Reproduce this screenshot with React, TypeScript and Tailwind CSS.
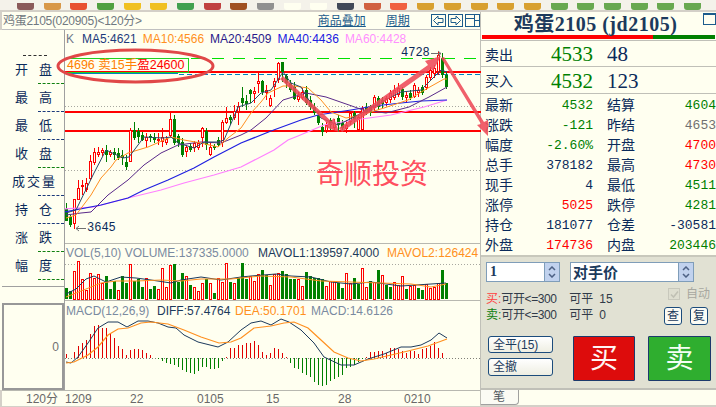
import React from 'react';

const IVORY = '#fffff0';
const sans = "[font-family:'Liberation_Sans','Noto_Sans_CJK_SC',sans-serif]";
const RED = '#ff0000';
const GREEN = '#008000';

// top, bottom, wick top, wick bottom, colour. x = 65 + 4 * index
type Candle = [number, number, number, number, 'r' | 'g'];
const candles: Candle[] = [
  [209, 221, 203, 221, 'g'], [217, 225, 215, 227, 'g'], [199, 224, 199, 229, 'r'], [188, 200, 180, 200, 'r'],
  [185, 187, 180, 195, 'r'], [183, 190, 178, 192, 'r'], [161, 179, 155, 180, 'r'], [152, 163, 148, 165, 'r'],
  [152, 155, 147, 157, 'r'], [150, 153, 148, 156, 'r'], [150, 155, 145, 162, 'g'], [152, 155, 150, 157, 'r'],
  [152, 155, 148, 160, 'g'], [153, 158, 148, 160, 'g'], [155, 158, 150, 165, 'g'], [162, 167, 155, 170, 'g'],
  [130, 162, 128, 162, 'r'], [130, 138, 122, 140, 'g'], [131, 137, 128, 143, 'g'], [135, 140, 132, 141, 'g'],
  [137, 141, 133, 147, 'r'], [136, 138, 134, 142, 'g'], [137, 140, 133, 143, 'g'], [139, 141, 133, 145, 'r'],
  [137, 142, 128, 147, 'r'], [139, 143, 136, 145, 'r'], [119, 136, 113, 137, 'r'], [119, 143, 115, 145, 'g'],
  [136, 143, 134, 147, 'g'], [142, 155, 138, 157, 'g'], [147, 152, 145, 157, 'r'], [146, 150, 143, 152, 'g'],
  [143, 148, 141, 152, 'r'], [143, 148, 140, 150, 'r'], [128, 138, 127, 147, 'r'], [131, 145, 128, 150, 'g'],
  [147, 155, 143, 156, 'r'], [146, 148, 144, 150, 'g'], [140, 145, 137, 147, 'g'], [122, 143, 120, 147, 'r'],
  [118, 123, 107, 124, 'r'], [117, 120, 115, 125, 'g'], [111, 118, 105, 120, 'r'], [106, 112, 102, 125, 'r'],
  [98, 103, 87, 107, 'g'], [101, 104, 95, 110, 'g'], [90, 94, 89, 103, 'g'], [91, 94, 87, 103, 'r'],
  [81, 84, 73, 93, 'r'], [81, 92, 80, 95, 'g'], [90, 93, 85, 100, 'r'], [98, 106, 95, 107, 'r'],
  [81, 87, 78, 97, 'r'], [63, 80, 62, 83, 'r'], [62, 72, 62, 82, 'g'], [76, 83, 74, 88, 'g'],
  [83, 90, 80, 92, 'g'], [87, 99, 82, 100, 'g'], [96, 100, 92, 102, 'r'], [92, 98, 88, 100, 'r'],
  [90, 103, 86, 105, 'g'], [100, 107, 96, 110, 'g'], [107, 113, 103, 115, 'g'], [115, 123, 113, 125, 'g'],
  [127, 132, 123, 136, 'g'], [125, 131, 122, 133, 'r'], [120, 125, 118, 130, 'g'], [123, 128, 119, 132, 'r'],
  [118, 125, 115, 132, 'g'], [123, 128, 120, 130, 'g'], [125, 129, 120, 133, 'r'], [113, 122, 111, 125, 'r'],
  [113, 120, 111, 128, 'g'], [117, 130, 115, 130, 'r'], [108, 130, 106, 130, 'r'], [107, 112, 103, 115, 'g'],
  [107, 113, 105, 116, 'g'], [97, 108, 95, 112, 'r'], [98, 107, 96, 110, 'g'], [100, 104, 97, 108, 'g'],
  [98, 103, 96, 106, 'r'], [93, 100, 90, 103, 'r'], [90, 98, 85, 100, 'r'], [88, 95, 83, 97, 'r'],
  [89, 97, 87, 100, 'g'], [95, 98, 92, 103, 'r'], [93, 98, 90, 100, 'g'], [85, 97, 83, 98, 'r'],
  [90, 93, 87, 97, 'r'], [87, 93, 85, 95, 'g'], [77, 88, 75, 90, 'r'], [70, 78, 67, 80, 'r'],
  [68, 74, 65, 78, 'r'], [55, 72, 52, 75, 'r'], [58, 75, 53, 78, 'g'], [75, 87, 72, 89, 'g'],
];

const ma5 = '65,213 75,210 93,173 105,150 122,158 128,157 143,137 162,138 170,137 177,143 193,148 203,142 217,142 223,140 237,107 250,103 260,93 270,90 282,72 290,83 300,87 312,107 320,118 337,125 353,117 370,108 390,97 400,92 420,90 430,80 440,70 446,72';
const ma10 = '65,218 75,215 90,195 100,178 110,167 115,160 127,153 147,147 170,137 183,140 200,143 217,147 227,138 240,128 250,113 260,102 267,93 282,86 293,86 307,88 320,100 330,112 345,118 360,115 383,108 407,100 427,88 443,79 446,79';
const ma20 = '65,215 80,213 90,212 107,195 127,180 143,165 160,153 177,145 200,142 220,143 240,135 250,130 265,118 282,100 305,93 325,97 348,105 362,110 385,113 408,107 428,97 446,87';
const ma40 = '63,212 100,205 127,198 143,190 167,180 193,168 213,157 240,143 270,131 300,120 317,115 350,110 373,106 400,103 420,101 446,100';
const ma60 = '63,209 93,207 127,198 160,190 183,183 213,175 240,167 273,150 287,140 297,136 323,125 353,120 390,115 423,107 446,100';

// top of each volume bar, x = 65 + 4 * index
const vol: [number, 'r' | 'g'][] = [
  [287, 'g'], [290, 'g'], [270, 'r'], [260, 'r'], [278, 'r'], [289, 'r'], [272, 'r'], [277, 'r'], [273, 'r'], [282, 'r'], [275, 'g'],
  [288, 'g'], [280, 'g'], [289, 'r'], [275, 'g'], [282, 'g'], [263, 'r'], [280, 'g'], [278, 'g'], [286, 'g'], [277, 'r'], [288, 'g'],
  [285, 'g'], [288, 'r'], [267, 'r'], [286, 'r'], [264, 'r'], [263, 'g'], [281, 'g'], [272, 'g'], [275, 'r'], [284, 'g'], [286, 'r'],
  [290, 'r'], [282, 'r'], [278, 'g'], [282, 'r'], [292, 'g'], [277, 'r'], [281, 'r'], [262, 'r'], [281, 'g'], [282, 'r'], [277, 'g'],
  [262, 'g'], [278, 'g'], [275, 'r'], [280, 'r'], [273, 'r'], [269, 'g'], [274, 'g'], [284, 'r'], [273, 'r'], [272, 'r'], [270, 'g'],
  [273, 'g'], [278, 'g'], [278, 'g'], [278, 'r'], [285, 'r'], [271, 'g'], [275, 'g'], [277, 'g'], [277, 'g'], [278, 'g'], [285, 'r'],
  [280, 'r'], [280, 'r'], [282, 'g'], [287, 'g'], [272, 'r'], [282, 'r'], [277, 'g'], [283, 'g'], [267, 'r'], [286, 'r'], [280, 'g'],
  [281, 'r'], [269, 'g'], [274, 'r'], [284, 'g'], [286, 'g'], [281, 'r'], [284, 'r'], [275, 'r'], [288, 'g'], [285, 'r'], [284, 'r'],
  [287, 'g'], [289, 'g'], [283, 'r'], [287, 'r'], [286, 'r'], [282, 'r'], [269, 'g'], [282, 'g'],
];
const mavol1 = '65,293 75,288 85,278 93,275 105,281 120,276 135,277 150,279 170,282 180,279 200,276 220,279 240,276 250,275 275,273 290,275 310,276 330,281 350,283 370,281 400,285 430,283 445,282';
const mavol2 = '65,296 80,290 100,282 115,280 135,280 160,279 180,280 200,278 230,278 260,275 290,276 320,280 350,281 380,282 410,283 430,286 445,283';

// top of each macd bar (above or below the zero line at y 358)
const macd = [
  354, 358, 352, 346, 343, 340, 334, 326, 325, 328, 328, 333, 338, 346, 349, 355, 350, 349, 349, 350, 353, 355, 358,
  359, 361, 363, 364, 365, 367, 370, 372, 373, 374, 371, 367, 367, 369, 369, 368, 361, 357, 348, 348,
  345, 345, 343, 343, 341, 345, 352, 355, 353, 348, 349, 353, 357, 363, 368, 369, 373, 375, 377, 382, 385, 386, 385, 381, 379, 377, 375, 368, 367, 365, 362, 359, 357, 352, 352, 351, 351, 353, 348, 348, 349, 351, 353, 351, 351, 354, 349, 348, 346, 342, 348, 353,
];
const diff = '65,362 70,363 77,357 87,343 97,328 107,322 117,322 126,327 137,321 147,321 157,323 167,327 175,328 183,335 197,342 217,347 227,342 240,330 250,323 260,321 270,325 280,319 288,322 300,330 313,343 323,357 340,365 353,365 367,359 383,354 400,347 410,347 420,345 430,340 438,333 446,338';
const dea = '65,363 73,362 87,355 97,347 107,335 117,329 127,328 140,323 150,322 167,324 183,330 200,337 218,343 230,342 240,338 253,328 270,326 283,323 293,322 307,328 320,340 333,352 347,358 360,361 373,359 390,355 407,351 427,346 446,339';

function MainPane() {
  return (
    <svg className="block w-[416px] h-[213px]" viewBox="64 30 416 213" shapeRendering="crispEdges">
      <line x1="64" x2="480" y1="106.5" y2="106.5" stroke="#a8a8a0" strokeDasharray="1 2" />
      <line x1="64" x2="480" y1="170.5" y2="170.5" stroke="#a8a8a0" strokeDasharray="1 2" />
      <line x1="190" x2="480" y1="58.5" y2="58.5" stroke="#00e000" strokeDasharray="12 9" />
      <rect x="64" y="71" width="416" height="2" fill={RED} />
      <rect x="64" y="111" width="416" height="2" fill={RED} />
      <rect x="64" y="130" width="416" height="2" fill={RED} />
      <line x1="64" x2="177" y1="73.5" y2="73.5" stroke="#0080c0" />
      <line x1="178" x2="480" y1="74.5" y2="74.5" stroke="#0080c0" strokeDasharray="5 3" />
      <rect x="63.5" y="58.5" width="124" height="14" fill="none" stroke="#20d020" />
      {candles.map(([t, b, wt, wb, c], i) => {
        const x = 65 + 4 * i;
        const col = c === 'r' ? RED : GREEN;
        return (
          <g key={i}>
            <line x1={x + 0.5} x2={x + 0.5} y1={wt} y2={wb} stroke={col} />
            {c === 'r' ? (
              <rect x={x - 0.5} y={t + 0.5} width={2} height={Math.max(b - t - 1, 1)} fill={IVORY} stroke={col} />
            ) : (
              <rect x={x - 1} y={t} width={3} height={b - t} fill={col} />
            )}
          </g>
        );
      })}
      <g fill="none" strokeWidth="1" shapeRendering="auto">
        <polyline points={ma60} stroke="#ff80ff" strokeWidth="1.2" />
        <polyline points={ma40} stroke="#2020e0" strokeWidth="1.2" />
        <polyline points={ma20} stroke="#5a2a8a" />
        <polyline points={ma10} stroke="#ff9020" />
        <polyline points={ma5} stroke="#2a4a6a" />
      </g>
      <path d="M430 53.5H440M437 51l3 2.5-3 2.5" stroke="#707070" fill="none" shapeRendering="auto" />
      <path d="M85 228.5H75M78 226l-3 2.5 3 2.5" stroke="#707070" fill="none" shapeRendering="auto" />
    </svg>
  );
}

function VolPane() {
  return (
    <svg className="block w-[416px] h-[57px]" viewBox="64 243 416 57" shapeRendering="crispEdges">
      <line x1="64" x2="480" y1="263.5" y2="263.5" stroke="#a8a8a0" strokeDasharray="1 2" />
      {vol.map(([t, c], i) => {
        const x = 65 + 4 * i;
        return c === 'r' ? (
          <rect key={i} x={x - 0.5} y={t + 0.5} width={2} height={298 - t - 0.5} fill={IVORY} stroke={RED} />
        ) : (
          <rect key={i} x={x - 1} y={t} width={3} height={298 - t} fill={GREEN} />
        );
      })}
      <polyline points={mavol1} fill="none" stroke="#1c3a5c" shapeRendering="auto" />
      <polyline points={mavol2} fill="none" stroke="#ff9020" shapeRendering="auto" />
    </svg>
  );
}

function MacdPane() {
  return (
    <svg className="block w-[416px] h-[88px]" viewBox="64 301 416 88" shapeRendering="crispEdges">
      <line x1="64" x2="480" y1="358.5" y2="358.5" stroke="#808078" strokeDasharray="1 2" />
      {macd.map((t, i) => {
        const x = 65.5 + 4 * i;
        return <line key={i} x1={x} x2={x} y1={t} y2={358} stroke={t < 358 ? '#e00000' : GREEN} />;
      })}
      <polyline points={diff} fill="none" stroke="#1c3a5c" shapeRendering="auto" />
      <polyline points={dea} fill="none" stroke="#ff9020" strokeWidth="1.2" shapeRendering="auto" />
    </svg>
  );
}

const railRows: [string[], string][] = [
  [['开', '盘'], 'border-[#108010]'],
  [['最', '高'], 'border-[#1c3a7c]'],
  [['最', '低'], 'border-[#1c3a7c]'],
  [['收', '盘'], 'border-[#108010]'],
  [['成', '交', '量'], 'border-[#1c3a7c]'],
  [['持', '仓'], 'border-[#1c3a7c]'],
  [['涨', '跌'], 'border-[#108010]'],
  [['幅', '度'], 'border-[#108010]'],
];

function LeftRail() {
  return (
    <div className="w-[62px] ml-[2px] flex flex-col shrink-0">
      <div className="h-[26px] flex items-end pl-[21px]">
        <div className="w-[24px] border-b border-dashed border-[#303030]" />
      </div>
      {railRows.map(([chars, line], i) => (
        <div key={i} className="h-[28px] flex flex-col justify-end">
          <div className={`flex-1 flex items-center text-[13px] leading-none text-[#0a2a5a] ${chars.length === 3 ? 'pl-[10px] gap-[2px]' : 'pl-[13px] gap-[11px]'}`}>
            {chars.map((c) => (
              <span key={c}>{c}</span>
            ))}
          </div>
          <div className={`ml-[36px] border-b border-dashed ${line}`} />
        </div>
      ))}
      <div className="mt-[6px] border-b border-[#a0a0a0]" />
      <div className="mt-[16px] h-[87px] border-2 border-[#989898] flex items-center justify-end pr-[3px] text-[12px] text-[#707070]">
        0
      </div>
    </div>
  );
}

function NavBtn({ kind }: { kind: 'l' | 'r' | 'p' }) {
  return (
    <div className="w-[15px] h-[13px] border border-[#1c5c8c]">
      <svg width="13" height="11" viewBox="0 0 13 11" fill="none" stroke="#1c5c8c">
        {kind === 'l' && <path d="M11 3.5H6V1L1.5 5.5 6 10V7.5h5z" />}
        {kind === 'r' && <path d="M2 3.5h5V1l4.5 4.5L7 10V7.5H2z" />}
        {kind === 'p' && <path d="M8.5 0V11M8.5 5.5H13M0 3.5H8" />}
      </svg>
    </div>
  );
}

function Spinner() {
  return (
    <div className="w-[15px] h-full bg-[#c1d2ee] flex flex-col items-center justify-center gap-[2px] border-l border-[#7f9db9]">
      <svg width="8" height="5" viewBox="0 0 8 5" fill="none" stroke="#4d6185" strokeWidth="1.5">
        <path d="M1 4l3-3 3 3" />
      </svg>
      <svg width="8" height="5" viewBox="0 0 8 5" fill="none" stroke="#4d6185" strokeWidth="1.5">
        <path d="M1 1l3 3 3-3" />
      </svg>
    </div>
  );
}

const quotes: [string, string, string, string, string, string][] = [
  ['最新', '4532', 'text-[#008000]', '结算', '4604', 'text-[#008000]'],
  ['涨跌', '-121', 'text-[#008000]', '昨结', '4653', 'text-[#707070]'],
  ['幅度', '-2.60%', 'text-[#008000]', '开盘', '4700', 'text-[#ff0000]'],
  ['总手', '378182', 'text-[#0a2a5a]', '最高', '4730', 'text-[#ff0000]'],
  ['现手', '4', 'text-[#0a2a5a]', '最低', '4511', 'text-[#008000]'],
  ['涨停', '5025', 'text-[#ff0000]', '跌停', '4281', 'text-[#008000]'],
  ['持仓', '181077', 'text-[#0a2a5a]', '仓差', '-30581', 'text-[#0a2a5a]'],
  ['外盘', '174736', 'text-[#ff0000]', '内盘', '203446', 'text-[#008000]'],
];

const toolbarIcons = [
  '#8a5a5a', '#d89848', '#e85030', '#50a040', '#f0c020', '#f0c020', '#40a050', '#c04040', '#a05020', '#909090', '#fffff0', '#fffff0',
  '#404858', '#d06040', '#f06040', '#d8a030', '#d8a030', '#d8a030', '#d8a030', '#d8a030', '#68a850', '#68a850', '#68a850', '#68a850', '#68a850', '#68a850',
];

export default function App() {
  const mono = "[font-family:'Liberation_Mono','Noto_Sans_CJK_SC',monospace]";
  const serif = "[font-family:'Liberation_Serif','Noto_Sans_CJK_SC',serif]";
  return (
    <div className={`relative w-[716px] h-[407px] overflow-hidden bg-[#d4d0c8] flex flex-col ${sans}`}>
      {/* Toolbar, cropped by the screenshot */}
      <div className="h-[10px] bg-[#f4f2ea] flex pl-[12px] items-end overflow-hidden shrink-0">
        {toolbarIcons.map((c, i) => (
          <div key={i} className="w-[26.7px] shrink-0 flex justify-center">
            <div className="w-[17px] h-[7px] rounded-b-[3px]" style={{ background: c }} />
          </div>
        ))}
      </div>

      <div className="h-[2px] shrink-0" />

      <div className="flex flex-1 min-h-0">
        {/* Chart side */}
        <div className="w-[480px] flex flex-col shrink-0">
          <div className="h-[18px] ml-[2px] bg-[#fffff0] flex items-center border-b border-[#c0c0c0] shrink-0">
            <span className="ml-[1px] text-[12px] leading-none tracking-[-0.3px] text-[#707880] whitespace-nowrap">鸡蛋2105(020905)&lt;120分&gt;</span>
            <span className="ml-[176px] text-[12px] leading-none text-[#1c5c8c] underline whitespace-nowrap">商品叠加</span>
            <span className="ml-[20px] text-[12px] leading-none text-[#1c5c8c] underline whitespace-nowrap">周期</span>
            <div className="ml-[21px] flex gap-[2px]">
              <NavBtn kind="l" />
              <NavBtn kind="r" />
              <NavBtn kind="p" />
            </div>
          </div>

          <div className="flex bg-[#fffff0]">
            <LeftRail />
            <div className="w-[416px] flex flex-col border-l border-[#a0a0a0]">
              <div className="relative h-[213px]">
                <MainPane />
                <div className="absolute left-[1px] top-[2px] flex text-[12px] leading-[14px] whitespace-nowrap gap-[6px]">
                  <span className="text-[#707888] w-[10px]">K</span>
                  <span className="text-[#1c3a7c]">MA5:4621</span>
                  <span className="text-[#ff9020]">MA10:4566</span>
                  <span className="text-[#2a1a8a]">MA20:4509</span>
                  <span className="text-[#2020e0]">MA40:4436</span>
                  <span className="text-[#ff90ff]">MA60:4428</span>
                </div>
                <div className="absolute left-[2px] top-[28px] text-[12.5px] leading-[14px] whitespace-nowrap">
                  <span className="text-[#ff8000]">4696 卖15手</span>
                  <span className="text-[#ff0000]">盈24600</span>
                </div>
                <span className={`absolute left-[336px] top-[16px] text-[12px] leading-[14px] text-[#0a2a5a] ${mono}`}>4728</span>
                <span className={`absolute left-[22px] top-[191px] text-[12px] leading-[14px] text-[#0a2a5a] ${mono}`}>3645</span>
                <span className="absolute left-[251px] top-[128px] text-[28px] leading-[34px] text-[#ff5060] whitespace-nowrap">奇顺投资</span>
              </div>
              <div className="relative h-[57px] border-t border-[#b8b8b0]">
                <VolPane />
                <div className="absolute left-[1px] top-[2px] flex text-[12px] leading-[14px] whitespace-nowrap">
                  <span className="text-[#7a8aa0] w-[192px]">VOL(5,10) VOLUME:137335.0000</span>
                  <span className="text-[#1c3a5c] w-[129px]">MAVOL1:139597.4000</span>
                  <span className="text-[#ff9020]">MAVOL2:126424</span>
                </div>
              </div>
              <div className="relative h-[88px] border-t border-[#b8b8b0]">
                <MacdPane />
                <div className="absolute left-[1px] top-[3px] flex text-[12px] leading-[14px] whitespace-nowrap">
                  <span className="text-[#7a8aa0] w-[91px]">MACD(12,26,9)</span>
                  <span className="text-[#1c3a5c] w-[78px]">DIFF:57.4764</span>
                  <span className="text-[#ff9020] w-[76px]">DEA:50.1701</span>
                  <span className="text-[#7a8aa0]">MACD:14.6126</span>
                </div>
              </div>
            </div>
          </div>

          <div className="h-[16px] ml-[2px] bg-[#fffff0] border-t border-[#b8b8b0] flex items-center text-[12px] leading-none text-[#686868] shrink-0">
            <span className="w-[56px] text-right">120分</span>
            <div className="flex">
              <span className="ml-[7px] w-[65px]">1209</span>
              <span className="w-[67px]">22</span>
              <span className="w-[69px]">0105</span>
              <span className="w-[72px]">15</span>
              <span className="w-[66px]">28</span>
              <span>0210</span>
            </div>
          </div>
        </div>

        {/* Quote side */}
        <div className="w-[236px] flex flex-col border-l border-[#c0c0b8] shrink-0">
          <div className="bg-[#fffff0] flex flex-col shrink-0 h-[243px]">
            <div className="relative h-[24px] flex items-center justify-center pr-[6px]">
              <span className={`text-[20px] leading-none font-bold tracking-[0.5px] text-[#1c3a5c] whitespace-pre ${serif}`}>鸡蛋2105 (jd2105)</span>
              <div className="absolute right-[0px] top-[1px] w-[13px] h-[12px] border border-t-2 border-[#1c5c8c]" />
            </div>
            <div className="h-[4px] mx-px flex shrink-0">
              <div className="w-[171px] bg-[#ff0000]" />
              <div className="flex-1 bg-[#008000]" />
            </div>
            <div className="h-[27px] border-t border-b border-[#c0c0b8] mt-px flex items-center pl-[4px] pt-[2px] shrink-0">
              <span className="text-[14px] w-[65px] leading-none text-[#0a2a5a]">卖出</span>
              <span className={`text-[21px] w-[43px] text-right leading-none text-[#008000] ${serif}`}>4533</span>
              <span className={`text-[21px] ml-[14px] leading-none text-[#0a2a5a] ${serif}`}>48</span>
            </div>
            <div className="h-[27px] border-b border-[#c0c0b8] flex items-center pl-[4px] pt-[2px] shrink-0">
              <span className="text-[14px] w-[65px] leading-none text-[#0a2a5a]">买入</span>
              <span className={`text-[21px] w-[43px] text-right leading-none text-[#008000] ${serif}`}>4532</span>
              <span className={`text-[21px] ml-[14px] leading-none text-[#0a2a5a] ${serif}`}>123</span>
            </div>
            <div className="grid grid-cols-[108px_109px] gap-x-[14px] pl-[4px] pt-[1px]">
              {quotes.map(([l1, v1, c1, l2, v2, c2]) => (
                <React.Fragment key={l1}>
                  <div className="h-[20px] flex items-center justify-between">
                    <span className="text-[14px] leading-none text-[#0a2a5a]">{l1}</span>
                    <span className={`text-[13px] leading-none ${c1} ${mono}`}>{v1}</span>
                  </div>
                  <div className="h-[20px] flex items-center justify-between">
                    <span className="text-[14px] leading-none text-[#0a2a5a]">{l2}</span>
                    <span className={`text-[13px] leading-none ${c2} ${mono}`}>{v2}</span>
                  </div>
                </React.Fragment>
              ))}
            </div>
          </div>

          <div className="flex-1 bg-[#e1e1d3] border-t-2 border-[#c8c8bc] flex flex-col min-h-0">
            <div className="mt-[5px] ml-[5px] flex gap-[10px] shrink-0">
              <div className="w-[74px] h-[20px] bg-white border border-[#7f9db9] flex justify-between items-center">
                <span className={`pl-[3px] text-[14px] font-bold leading-none text-[#1c3a5c] ${serif}`}>1</span>
                <Spinner />
              </div>
              <div className="w-[124px] h-[20px] bg-white border border-[#7f9db9] flex justify-between items-center">
                <span className="pl-[2px] text-[15px] font-bold leading-none text-[#1c3a5c]">对手价</span>
                <Spinner />
              </div>
            </div>
            <div className="mt-[6px] h-[37px] flex shrink-0">
              <div className="w-[187px] pl-[5px] pt-[3px] text-[12px] leading-none text-[#303a48]">
                <div className="h-[16px] flex items-center whitespace-nowrap">
                  <span className="text-[#ff4040]">买:</span>
                  <span className="w-[68px] tracking-[-0.4px]">可开&lt;=300</span>
                  <span className="w-[30px]">可平</span>
                  <span>15</span>
                </div>
                <div className="h-[16px] flex items-center whitespace-nowrap">
                  <span className="text-[#108010]">卖:</span>
                  <span className="w-[68px] tracking-[-0.4px]">可开&lt;=300</span>
                  <span className="w-[30px]">可平</span>
                  <span>0</span>
                </div>
              </div>
              <div className="flex flex-col">
                <div className="h-[12px] flex items-center gap-[6px]">
                  <div className="w-[12px] h-[12px] border border-[#c8c8bc] bg-[#deded0] flex items-center justify-center">
                    <svg width="9" height="9" viewBox="0 0 9 9" fill="none" stroke="#c0c0b4" strokeWidth="1.6">
                      <path d="M1 4.5l2.5 2.5L8 1.5" />
                    </svg>
                  </div>
                  <span className="text-[12px] leading-none text-[#a8a8a0]">自动</span>
                </div>
                <div className="mt-[7px] -ml-[4px] flex gap-[8px]">
                  {['查', '复'].map((c) => (
                    <div key={c} className="w-[18px] h-[18px] rounded-[3px] border border-[#1c4c7c] bg-[#fbfbf4] flex items-center justify-center text-[12px] leading-none text-[#1c3a5c]">
                      {c}
                    </div>
                  ))}
                </div>
              </div>
            </div>
            <div className="mt-[11px] flex shrink-0">
              <div className="ml-[7px] w-[65px] flex flex-col gap-[5px]">
                <div className="h-[17px] rounded-[3px] border border-[#1c4c7c] bg-gradient-to-b from-white to-[#eeeee2] pl-[4px] flex items-center text-[12px] leading-none text-[#1c3a5c]">全平(15)</div>
                <div className="h-[18px] rounded-[3px] border border-[#1c4c7c] bg-gradient-to-b from-white to-[#eeeee2] pl-[4px] flex items-center text-[12px] leading-none text-[#1c3a5c]">全撤</div>
              </div>
              <div className="ml-[20px] w-[62px] h-[45px] bg-[#dd0c0c] border border-[#1c3a6c] rounded-[1px] flex items-center justify-center text-[28px] leading-none text-[#fff4f4]">买</div>
              <div className="ml-[13px] w-[63px] h-[45px] bg-[#2fae2f] border border-[#1c3a6c] rounded-[1px] flex items-center justify-center text-[28px] leading-none text-[#f4fff4]">卖</div>
            </div>
          </div>

          <div className="h-[17px] bg-[#fffff0] border-t-2 border-[#c0c0b8] shrink-0 flex">
            <div className="w-[38px] h-[15px] border-r border-b border-[#a0a0a0] rounded-br-[4px] bg-[#fbfbf4] text-[12px] leading-[14px] text-[#505860] pl-[12px]">笔</div>
          </div>
        </div>
      </div>

      <div className="h-[2px] shrink-0" />

      {/* Hand-drawn annotations lying over the chart */}
      <svg className="absolute left-0 top-0 pointer-events-none" width="716" height="407" viewBox="0 0 716 407" fill="none">
        <ellipse cx="135.5" cy="66" rx="77.5" ry="16" stroke="#e04848" strokeWidth="3" />
        <g fill="#ee4a58" fillOpacity="0.88">
          <polygon points="280,79 283,76 331,121 334,118 339,132 325,127 328,124" />
          <polygon points="342,132 339,128 428,65 425,61 441,56 433,71 431,69" />
          <polygon points="441,58 444,57 484,122 488,120 488,136 477,125 481,124" />
        </g>
      </svg>
    </div>
  );
}
